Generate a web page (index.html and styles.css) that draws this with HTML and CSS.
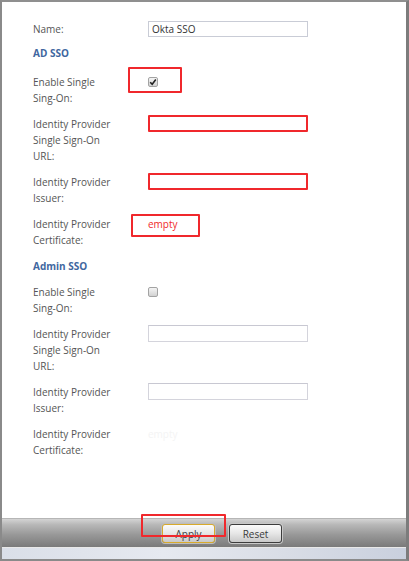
FILE: index.html
```html
<!DOCTYPE html>
<html>
<head>
<meta charset="utf-8">
<link rel="stylesheet" href="styles.css">
</head>
<body>
<div class="frame">
  <div class="content">
    <div class="row row-name">
      <div class="label">Name:</div>
      <div class="ctrl"><div class="input">Okta SSO</div></div>
    </div>
    <div class="heading heading-ad">AD SSO</div>
    <div class="row">
      <div class="label">Enable Single<br>Sing-On:</div>
      <div class="ctrl"><span class="checkbox checked"><svg viewBox="0 0 8 8" width="8" height="8"><path d="M1.2 4.2 L3.2 6.2 L6.8 1.6" fill="none" stroke="#222" stroke-width="1.6"/></svg></span></div>
    </div>
    <div class="row">
      <div class="label">Identity Provider<br>Single Sign-On<br>URL:</div>
      <div class="ctrl"><div class="input input-red"></div></div>
    </div>
    <div class="row">
      <div class="label">Identity Provider<br>Issuer:</div>
      <div class="ctrl"><div class="input input-red"></div></div>
    </div>
    <div class="row">
      <div class="label">Identity Provider<br>Certificate:</div>
      <div class="ctrl"><span class="empty empty-red">empty</span></div>
    </div>
    <div class="heading">Admin SSO</div>
    <div class="row">
      <div class="label">Enable Single<br>Sing-On:</div>
      <div class="ctrl"><span class="checkbox"></span></div>
    </div>
    <div class="row">
      <div class="label">Identity Provider<br>Single Sign-On<br>URL:</div>
      <div class="ctrl"><div class="input"></div></div>
    </div>
    <div class="row">
      <div class="label">Identity Provider<br>Issuer:</div>
      <div class="ctrl"><div class="input"></div></div>
    </div>
    <div class="row">
      <div class="label">Identity Provider<br>Certificate:</div>
      <div class="ctrl"><span class="empty empty-faint">empty</span></div>
    </div>
  </div>
  <div class="footer">
    <button class="btn btn-apply">Apply</button>
    <button class="btn">Reset</button>
  </div>
  <div class="strip"></div>

  <div class="mark mark-check"></div>
  <div class="mark mark-empty"></div>
  <div class="mark mark-apply"></div>
</div>
</body>
</html>
```
FILE: styles.css
```css
html, body {
  margin: 0;
  padding: 0;
  background: #ffffff;
}
.frame {
  position: relative;
  width: 409px;
  height: 561px;
  box-sizing: border-box;
  border-left: 2px solid #8a8a8a;
  border-top: 2px solid #8f8f8f;
  border-right: 3px solid #7c7c7c;
  border-bottom: 2px solid #8a8a8a;
  display: flex;
  flex-direction: column;
  font-family: "Open Sans", "DejaVu Sans", sans-serif;
  font-size: 10px;
  color: #555555;
  overflow: hidden;
}
.content {
  flex: 1;
  padding: 19px 0 0 31px;
  background: #ffffff;
}
.row {
  display: grid;
  grid-template-columns: 115px 160px;
  margin-bottom: 10px;
}
.row-name {
  margin-bottom: 8px;
}
.label {
  line-height: 16px;
}
.ctrl {
  display: flex;
  align-items: flex-start;
}
.heading {
  font-weight: bold;
  color: #3f67a0;
  line-height: 16px;
  margin-bottom: 10px;
}
.heading-ad {
  margin-bottom: 13px;
}
.input {
  box-sizing: border-box;
  width: 160px;
  height: 17px;
  margin-top: -1px;
  border: 1px solid #d4d4dc;
  border-top-color: #c8c8d2;
  background: #ffffff;
  color: #333333;
  padding-left: 3px;
  line-height: 15px;
}
.row-name .input {
  margin-top: 0;
  height: 16px;
  line-height: 14px;
  border-color: #c9ccd6;
}
.input-red {
  border: 2px solid #f0282c;
  border-radius: 1px;
}
.checkbox {
  box-sizing: border-box;
  width: 10px;
  height: 10px;
  margin-top: 3px;
  border: 1px solid #a3a3a3;
  border-radius: 2px;
  background: linear-gradient(#f4f4f4, #d2d2d2);
  display: flex;
  align-items: center;
  justify-content: center;
}
.checkbox svg {
  display: block;
}
.empty {
  line-height: 16px;
}
.empty-red {
  color: #f02a2a;
}
.empty-faint {
  color: #f4f4f4;
}
.footer {
  height: 29px;
  box-sizing: border-box;
  background: linear-gradient(#d4d4d4 0%, #b8b8b8 20%, #999999 55%, #7a7a7a 100%);
  border-top: 1px solid #b6b6b6;
  display: flex;
  justify-content: center;
  align-items: flex-start;
  gap: 14px;
  padding-top: 5px;
  padding-left: 36px;
}
.btn {
  box-sizing: border-box;
  width: 53px;
  height: 19px;
  margin: 0;
  padding: 0;
  border: 1px solid #3c3c3c;
  border-radius: 3px;
  background: linear-gradient(#fbfbfb 0%, #e6e6e6 50%, #c9c9c9 100%);
  box-shadow: 0 0 0 1px #c8c8c8;
  font-family: "Open Sans", "DejaVu Sans", sans-serif;
  font-size: 10px;
  color: #3a3a3a;
  line-height: 16px;
}
.btn-apply {
  border: 1px solid #d8aa2c;
  box-shadow: 0 0 0 1px #bdbdbd;
}
.strip {
  height: 11px;
  background: linear-gradient(90deg, #dadfe8 0%, #e6e9f0 40%, #d9dde6 70%, #c9d0de 100%);
  border-top: 1px solid #e8e8e8;
}
.mark {
  position: absolute;
  box-sizing: border-box;
  border: 2px solid #f0282c;
  border-radius: 1px;
}
.mark-check {
  left: 126px;
  top: 65px;
  width: 54px;
  height: 26px;
}
.mark-empty {
  left: 129px;
  top: 212px;
  width: 69px;
  height: 23px;
}
.mark-apply {
  left: 139px;
  top: 512px;
  width: 85px;
  height: 23px;
}
```
